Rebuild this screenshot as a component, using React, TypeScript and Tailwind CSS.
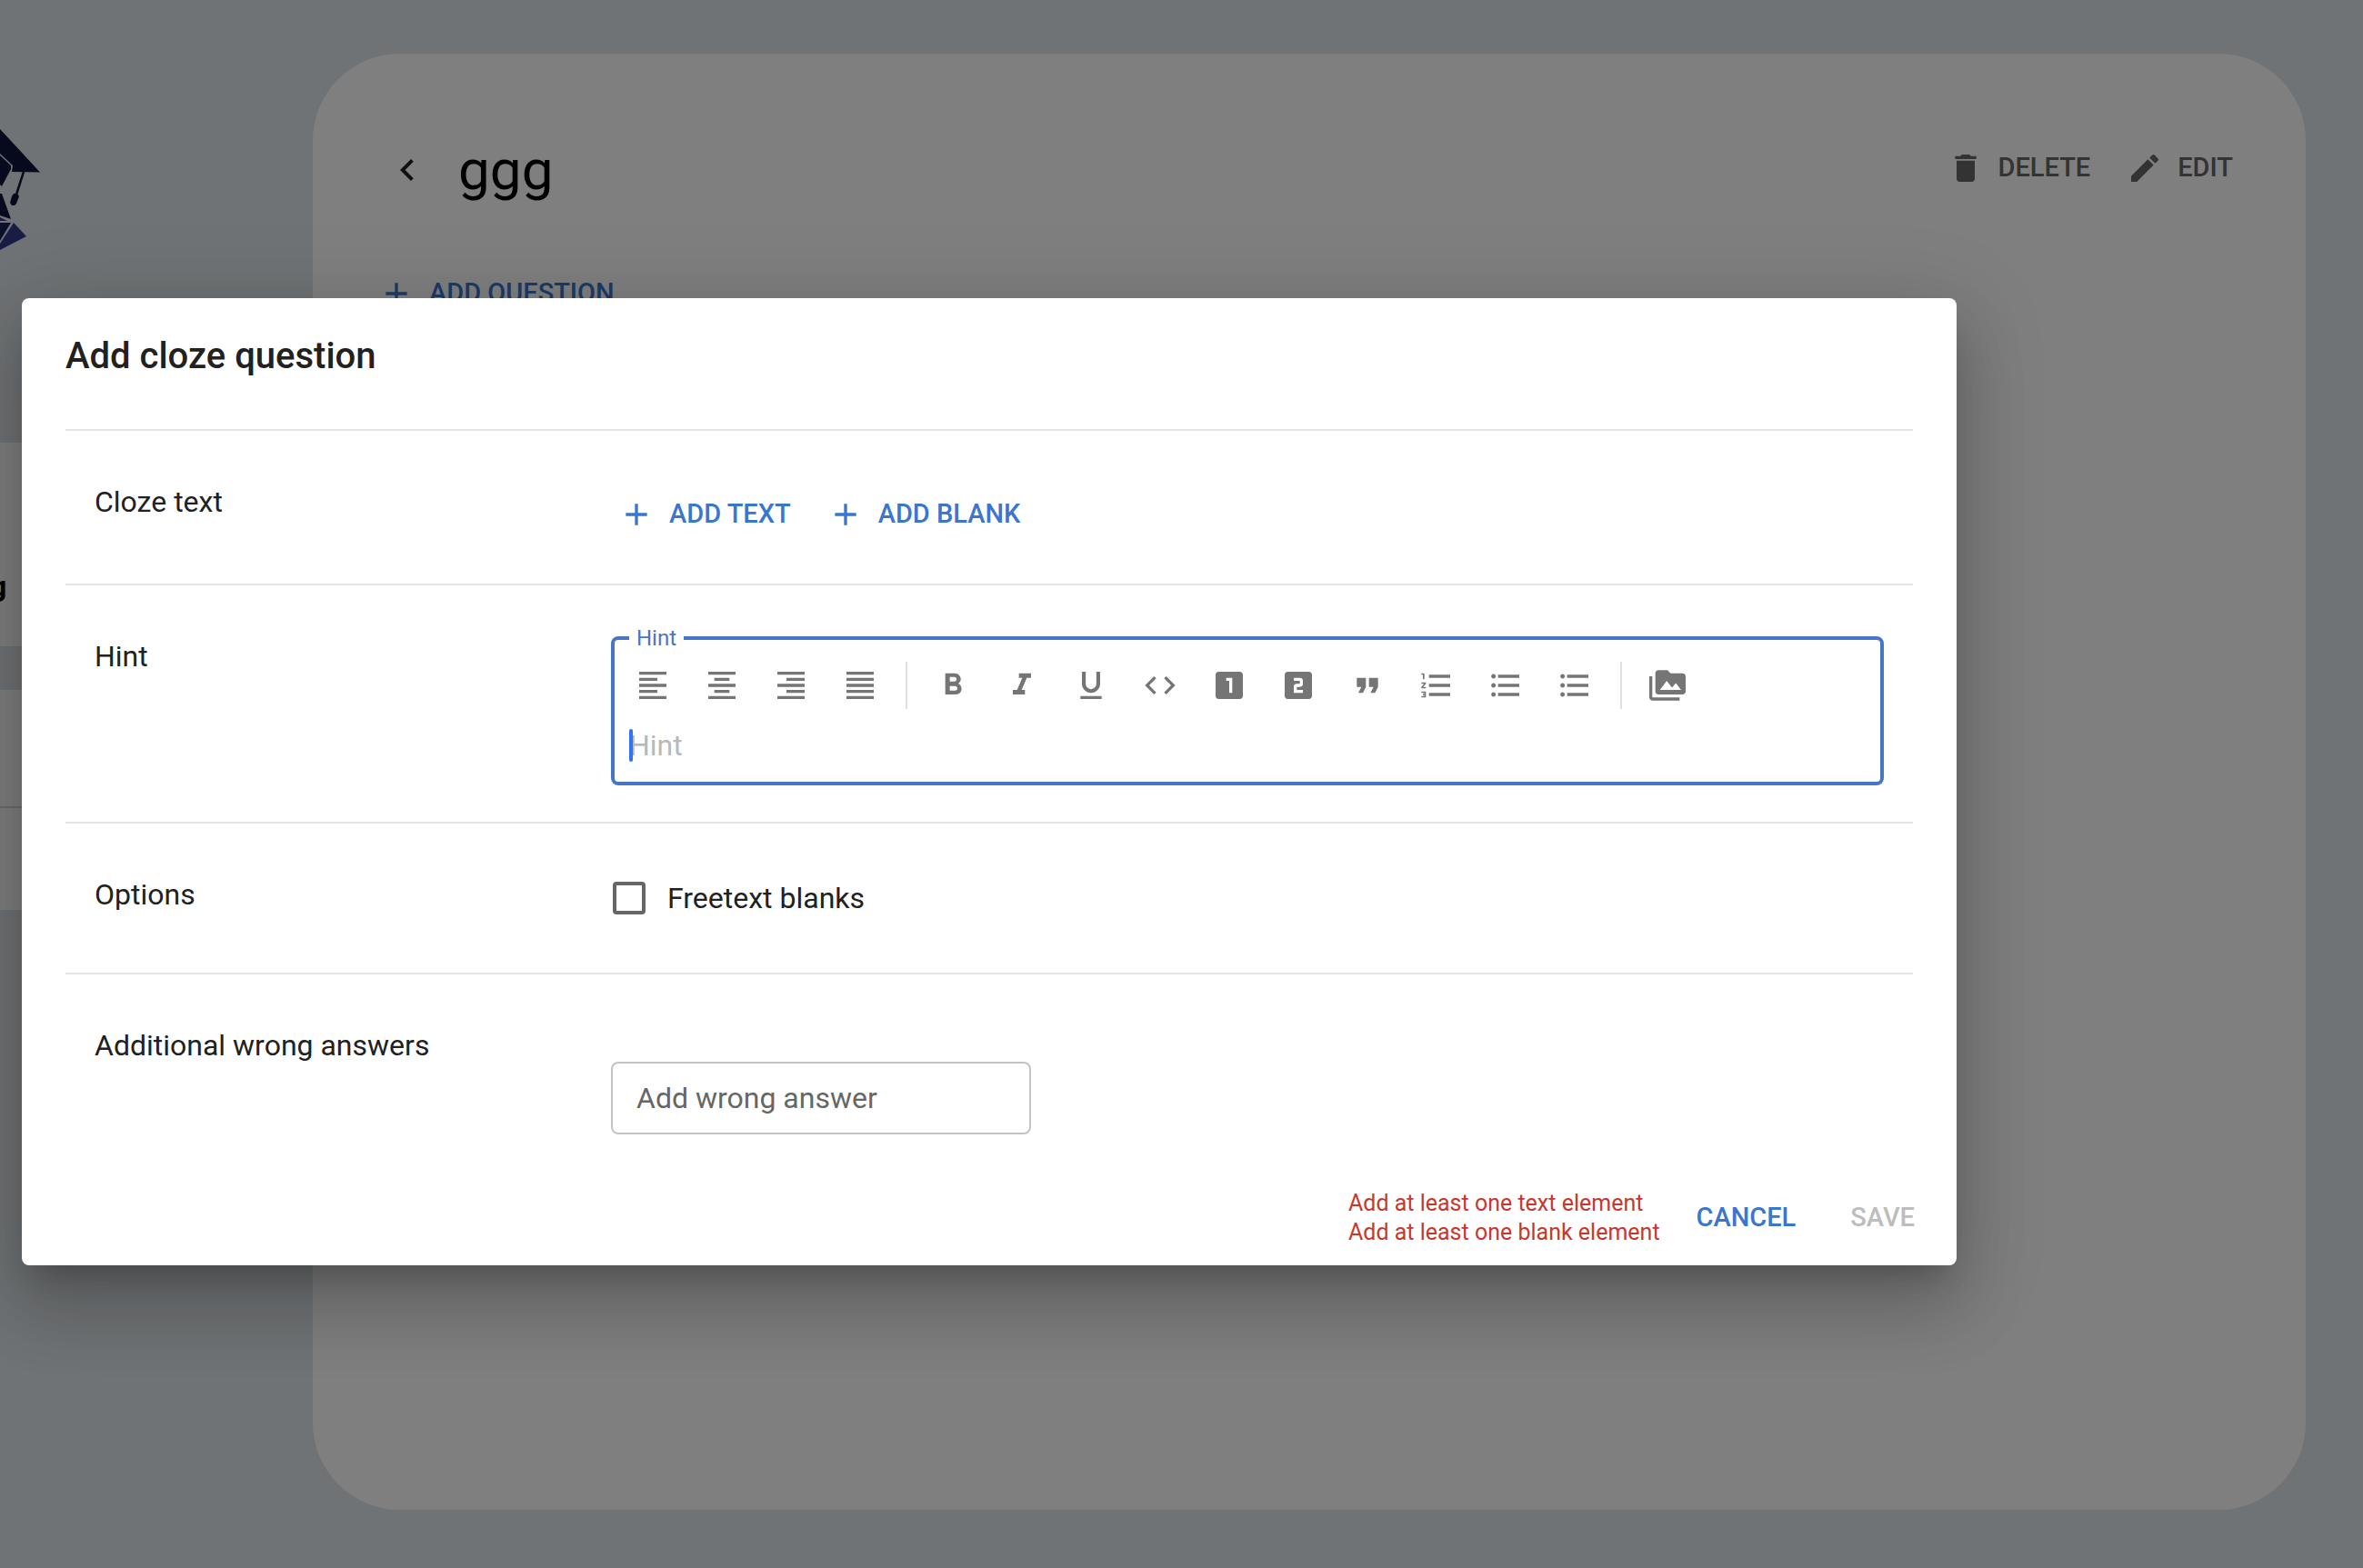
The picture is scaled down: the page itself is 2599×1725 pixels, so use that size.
import React from "react";
import {
  MdAdd, MdChevronLeft, MdDelete, MdEdit, MdFormatAlignLeft, MdFormatAlignCenter, MdFormatAlignRight,
  MdFormatAlignJustify, MdFormatBold, MdFormatItalic, MdFormatUnderlined, MdCode, MdLooksOne, MdLooksTwo,
  MdFormatQuote, MdFormatListNumbered, MdFormatListBulleted, MdPermMedia,
} from "react-icons/md";
import type { IconType } from "react-icons";

type Tool = { label: string; Icon: IconType };

const alignTools: Tool[] = [
  { label: "Align left", Icon: MdFormatAlignLeft },
  { label: "Align center", Icon: MdFormatAlignCenter },
  { label: "Align right", Icon: MdFormatAlignRight },
  { label: "Justify", Icon: MdFormatAlignJustify },
];

const markTools: Tool[] = [
  { label: "Bold", Icon: MdFormatBold },
  { label: "Italic", Icon: MdFormatItalic },
  { label: "Underline", Icon: MdFormatUnderlined },
  { label: "Code", Icon: MdCode },
  { label: "Heading 1", Icon: MdLooksOne },
  { label: "Heading 2", Icon: MdLooksTwo },
  { label: "Quote", Icon: MdFormatQuote },
  { label: "Numbered list", Icon: MdFormatListNumbered },
  { label: "Bulleted list", Icon: MdFormatListBulleted },
  { label: "List", Icon: MdFormatListBulleted },
];

function TextButton({ icon: Icon, color, children }: { icon?: IconType; color: string; children: React.ReactNode }) {
  return (
    <button type="button" className={`flex h-[72px] items-center gap-4 text-[29px] font-medium uppercase ${Icon ? "pl-2 pr-4" : "px-4"} ${color}`}>
      {Icon && <Icon className="size-10" />}
      {children}
    </button>
  );
}

function ToolButtons({ tools }: { tools: Tool[] }) {
  return (
    <>
      {tools.map(({ label, Icon }) => (
        <button key={label} type="button" aria-label={label} className="flex h-[52px] w-[76px] items-center justify-center">
          <Icon className="size-10" />
        </button>
      ))}
    </>
  );
}

function Row({ label, children }: { label: string; children: React.ReactNode }) {
  return (
    <section className="flex border-t-2 border-[#e5e5eb] px-8">
      <h3 className="w-[568px] shrink-0 pt-[54px] text-[32px] leading-[48px]">{label}</h3>
      <div className="min-w-0 flex-1">{children}</div>
    </section>
  );
}

function Logo() {
  return (
    <svg viewBox="0 0 44 134" className="h-[134px] w-11" aria-hidden="true">
      <path d="M0 0 44 47.500 13 47 14 40 0 27Z" fill="#0c1438" />
      <path d="M0 29 12 40 12 44 2 63 0 61Z" fill="#0c1438" />
      <path d="M26 47 18 72" stroke="#0c1438" strokeWidth="2.500" fill="none" />
      <path d="M15 71h4l2 3-3 8-2 2h-3l-2-3 2-7Z" fill="#0c1438" />
      <path d="M0 71h2l10 28L0 95Z" fill="#0c1438" />
      <path d="M0 97 8 101H0Z" fill="#323a8a" />
      <path d="M0 103H12L0 123Z" fill="#14215a" />
      <path d="M15 103 29 118 0 133V126Z" fill="#323a8a" />
    </svg>
  );
}

function Sidebar() {
  return (
    <aside className="flex w-[280px] shrink-0 flex-col pt-[142px]">
      <Logo />
      <div className="mt-[211px] flex h-56 bg-white pt-[134px]">
        <span className="-ml-[11px] text-[32px] leading-[48px] font-bold text-black">g</span>
      </div>
      <div className="mt-12 h-[242px] bg-white">
        <div className="h-[130px] border-b-2 border-[#dddddd]" />
      </div>
    </aside>
  );
}

export default function App() {
  return (
    <div className="relative flex h-screen overflow-hidden bg-[#e0e6eb] font-['Roboto',sans-serif] text-[#212121]">
      <Sidebar />
      <main className="mt-[59px] mr-[63px] mb-16 ml-16 flex-1 rounded-[96px] bg-white pt-20 pr-16 pl-16 text-black">
        <header className="flex items-center">
          <button type="button" aria-label="Back" className="p-4 text-[#212121]">
            <MdChevronLeft className="size-12" />
          </button>
          <h1 className="ml-4 text-[62px] leading-[96px]">ggg</h1>
          <div className="mb-1 ml-auto flex gap-4">
            <TextButton icon={MdDelete} color="text-[#666666]">Delete</TextButton>
            <TextButton icon={MdEdit} color="text-[#666666]">Edit</TextButton>
          </div>
        </header>
        <div className="mt-[52px]">
          <TextButton icon={MdAdd} color="text-[#3a76d0]">Add question</TextButton>
        </div>
      </main>

      <div className="absolute inset-0 bg-black/50 pt-[328px] pr-[447px] pl-6">
        <div
          role="dialog"
          aria-labelledby="dialog-title"
          className="rounded-lg bg-white shadow-[0_22px_30px_-14px_rgba(0,0,0,0.2),0_48px_76px_6px_rgba(0,0,0,0.14),0_18px_92px_16px_rgba(0,0,0,0.12)]"
        >
          <h2 id="dialog-title" className="px-12 py-8 text-[40px] leading-[64px] font-medium">Add cloze question</h2>
          <div className="px-12 pt-4">
            <Row label="Cloze text">
              <div className="flex gap-4 pt-14 pb-10">
                <TextButton icon={MdAdd} color="text-[#3a76cd]">Add text</TextButton>
                <TextButton icon={MdAdd} color="text-[#3a76cd]">Add blank</TextButton>
              </div>
            </Row>
            <Row label="Hint">
              <div className="relative mt-14 mb-10 h-[164px] rounded-lg border-4 border-[#4776c7] px-4 pt-6">
                <label htmlFor="hint" className="absolute -top-4 left-4 bg-white px-2 text-[24px] leading-7 text-[#4776c7]">Hint</label>
                <div className="flex items-center text-[#757575]">
                  <div className="-ml-3 flex"><ToolButtons tools={alignTools} /></div>
                  <div className="mx-3 h-[52px] w-0.5 bg-[#e0e0e0]" />
                  <ToolButtons tools={markTools} />
                  <div className="mx-3 h-[52px] w-0.5 bg-[#e0e0e0]" />
                  <ToolButtons tools={[{ label: "Media", Icon: MdPermMedia }]} />
                </div>
                <div className="relative mt-4">
                  <textarea id="hint" rows={1} placeholder="Hint" className="block h-12 w-full resize-none text-[32px] leading-[48px] outline-none placeholder:text-[#b9b9b9]" />
                  <span className="absolute top-1.5 left-0 h-9 w-1 rounded-sm bg-[#2f73f6]" />
                </div>
              </div>
            </Row>
            <Row label="Options">
              <label className="my-[58px] ml-0.5 flex h-12 items-center gap-6 text-[32px] leading-[48px]">
                <input type="checkbox" className="size-9 appearance-none rounded border-4 border-[#666666]" />
                Freetext blanks
              </label>
            </Row>
            <Row label="Additional wrong answers">
              <input
                type="text"
                aria-label="Additional wrong answer"
                placeholder="Add wrong answer"
                className="mt-24 block h-20 w-[462px] rounded-lg border-2 border-[#c4c4c4] px-[26px] text-[32px] placeholder:text-[#666666]"
              />
            </Row>
          </div>
          <footer className="flex items-center justify-end gap-6 pt-14 pr-[30px] pb-4">
            <p className="text-[25px] leading-8 text-[#c9372c]">
              Add at least one text element
              <br />
              Add at least one blank element
            </p>
            <div className="flex gap-7">
              <TextButton color="text-[#3a76cd]">Cancel</TextButton>
              <TextButton color="text-[#bdbdbd]">Save</TextButton>
            </div>
          </footer>
        </div>
      </div>
    </div>
  );
}
